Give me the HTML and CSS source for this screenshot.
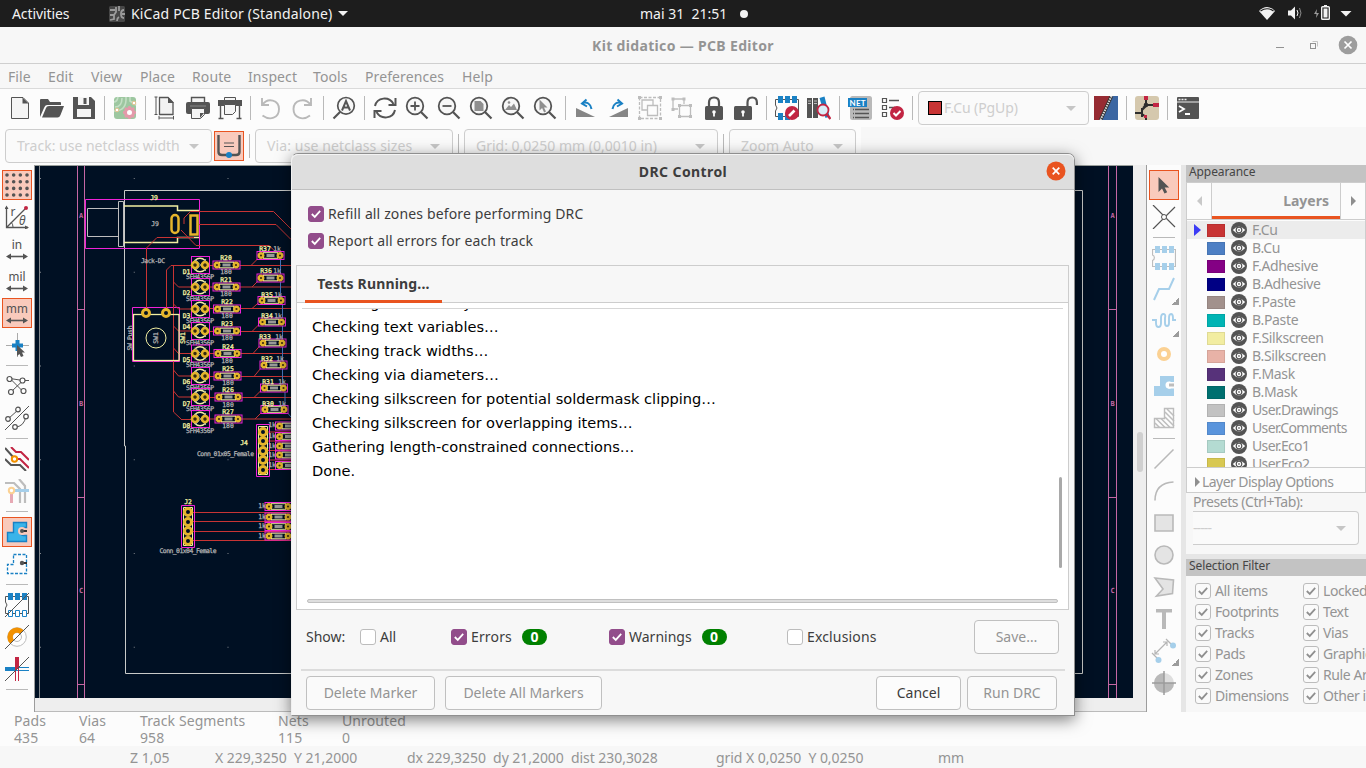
FILE: index.html
```html
<!DOCTYPE html>
<html lang="en">
<head>
<meta charset="utf-8">
<title>Kit didatico — PCB Editor</title>
<link rel="stylesheet" href="styles.css">
</head>
<body>
<svg class="defs" width="0" height="0">
  <symbol id="eye" viewBox="0 0 16 16"><circle cx="8" cy="8" r="8" fill="#545454"/><path d="M1.800 8Q8 1 14.200 8Q8 15 1.800 8Z" fill="#fff"/><circle cx="8" cy="8" r="2.800" fill="#fff" stroke="#545454" stroke-width="1.200"/><circle cx="8" cy="8" r=".9" fill="#777"/></symbol>
  <symbol id="lens" viewBox="0 0 24 24"><circle cx="10" cy="10" r="8.300" fill="#f7f7f7" stroke="#545454" stroke-width="1.800"/><path d="M16 16L22.500 22.500" stroke="#545454" stroke-width="2.200"/></symbol>
  <symbol id="tick" viewBox="0 0 16 16"><path d="M3.200 8L6.600 11.300L12.800 4.400" fill="none" stroke="currentColor" stroke-width="2"/></symbol>
  <symbol id="chip" viewBox="0 0 24 24"><path d="M.5 3.500H23.500V20.500H.5V14.500C3 13.500 3 10 .5 9Z" fill="none" stroke="#bdbdbd" stroke-width="1.200"/><path d="M3 0h5v7H3zM10 0h5v7h-5zM17 0h5v7h-5zM3 17h5v7H3zM10 17h5v7h-5zM17 17h5v7h-5z" fill="currentColor"/></symbol>
</svg>

<header class="shell">
  <span class="activities">Activities</span>
  <svg class="app-icon" viewBox="0 0 16 16"><rect width="16" height="16" rx="1.500" fill="#474747"/><path d="M1 4h5M1 9h4l2-3V1M1 14l4-1V9M15 4c-4 0-4 8 0 8M10 0v5M8 15c0-3 2-4 2-4M13 8h3" stroke="#9b9b9b" stroke-width="1.800" fill="none"/></svg>
  <span class="app-name">KiCad PCB Editor (Standalone)</span><i class="caret white"></i>
  <span class="clock">mai 31&nbsp; 21:51</span><i class="dot"></i>
  <svg class="tray" viewBox="1256 0 110 27"><path d="M1259 11Q1267 3 1275 11L1267 20Z" fill="#f2f2f2"/><path d="M1260.500 11Q1267 6.500 1273.500 11" stroke="#1d1d1d" stroke-width="1.200" fill="none"/><path d="M1288 10.500h3l4-4v13l-4-4h-3z" fill="#f2f2f2"/><path d="M1297 10q2 3 0 6" stroke="#f2f2f2" fill="none"/><path d="M1299.500 8q3 5 0 10" stroke="#8a8a8a" fill="none"/><path d="M1317 9l-3 5h2.500l-.5 4 3-5h-2.500z" fill="#9a9a9a"/><rect x="1321.700" y="6.700" width="7.600" height="12.600" rx=".8" fill="none" stroke="#f2f2f2" stroke-width="1.400"/><path d="M1323.500 8.500h4v9h-4zM1324 5h3v1h-3z" fill="#f2f2f2"/><path d="M1340.500 11h11l-5.500 5.500z" fill="#f2f2f2"/></svg>
</header>

<div class="titlebar">
  <b>Kit didatico — PCB Editor</b>
  <svg class="winbtns" viewBox="1270 33 90 24"><path d="M1276 47.500h8" stroke="#929292"/><path d="M1312.500 41.500h5v5" fill="none" stroke="#c5c5c5"/><rect x="1310.500" y="43.500" width="5" height="5" fill="none" stroke="#929292"/><circle cx="1348" cy="45" r="9.300" fill="#9d9d9d"/><path d="M1344.500 41.500l7 7m0-7l-7 7" stroke="#fff" stroke-width="1.700"/></svg>
</div>

<nav class="menubar"><span class="m1">File</span><span class="m2">Edit</span><span class="m3">View</span><span class="m4">Place</span><span class="m5">Route</span><span class="m6">Inspect</span><span class="m7">Tools</span><span class="m8">Preferences</span><span>Help</span></nav>

<div class="toolbar main-tools">
  <svg class="tool" viewBox="0 0 24 24"><path d="M3.500 1.500H15L20.500 7V22.500H3.500Z" fill="#f5f5f5" stroke="#545454"/><path d="M14.500 1.500V7.500H20.500Z" fill="#545454"/></svg>
  <svg class="tool" viewBox="0 0 24 24"><path d="M0 21V4q0-1 1-1h7l2 3h10q1 0 1 1v2H7Q5 9 4 12Z" fill="#545454"/><path d="M2 21.500L6 12q.5-2 3-2h15l-3.500 9q-1 2.500-3 2.500Z" fill="#545454"/></svg>
  <svg class="tool" viewBox="0 0 24 24"><path d="M1 1h18l4 4v18H1z" fill="#545454"/><path d="M6 1h11v8H6zM5 13h14v8H5z" fill="#f5f5f5"/><path d="M11.500 2h3v6h-3z" fill="#545454"/></svg>
  <i class="sep"></i>
  <svg class="tool" viewBox="0 0 24 24"><rect x="1" y="1" width="22" height="22" rx="3" fill="#9dc7a0"/><path d="M2 11Q9 11 9 2M1 15Q14 15 13 1M1 6q3 0 4-5M17 1v4l6 4" stroke="#c4dfc5" stroke-width="1.600" fill="none"/><g stroke="#e49aaa" stroke-width="3" fill="#fff"><circle cx="16.500" cy="16.500" r="4"/><path d="M16.500 10v2m0 9v2M10 16.500h2m9 0h2M12 12l1.500 1.500m6 6l1.500 1.500M21 12l-1.500 1.500m-6 6L12 21" stroke-width="2.500"/></g><circle cx="4" cy="14" r="1.800" fill="#fff" stroke="#e6c18e"/><circle cx="21" cy="7" r="1.800" fill="#fff" stroke="#e6c18e"/></svg>
  <i class="sep"></i>
  <svg class="tool" viewBox="0 0 24 24"><path d="M5.500 1.500H14l5 5V18.500H5.500Z" fill="#f2f2f2" stroke="#545454" stroke-width="1.300"/><path d="M14 1v6h6z" fill="#545454"/><path d="M.5 1h3M.5 18.500h3M2 1v17.500M5 20v3.500M19.500 20v3.500M5 22h14" stroke="#545454" fill="none"/></svg>
  <svg class="tool" viewBox="0 0 24 24"><path d="M5.500 7V1.500h13V7" fill="#f5f5f5" stroke="#545454" stroke-width="1.400"/><rect y="6" width="24" height="12" rx="2" fill="#545454"/><path d="M4 10h16" stroke="#777" stroke-width="1.500"/><path d="M5.500 12.500h13v6l-4 4h-9z" fill="#f5f5f5" stroke="#545454"/><path d="M18 17h-4v5z" fill="#545454"/></svg>
  <svg class="tool" viewBox="0 0 24 24"><path d="M6.500 5V1.500h11V5" fill="#f5f5f5" stroke="#545454"/><path d="M0 4h24v6H0z" fill="#545454"/><path d="M6.500 8.500h11v7l-3 3h-8z" fill="#f5f5f5" stroke="#545454"/><path d="M2.500 10v12m19-12v12M.5 22.500h5m13 0h5" stroke="#545454" stroke-width="1.400"/></svg>
  <i class="sep"></i>
  <svg class="tool" viewBox="0 0 24 24"><path d="M3 2v7h7M3.500 8.500C9 1 20 4 20 13S11 25 3.500 19.500" fill="none" stroke="#b9b9b9" stroke-width="1.900"/></svg>
  <svg class="tool" viewBox="0 0 24 24"><path d="M20 2v7h-7M19.500 8.500C14 1 2.500 4 2.500 13S12 25 19 19.500" fill="none" stroke="#b9b9b9" stroke-width="1.900"/></svg>
  <i class="sep"></i>
  <svg class="tool" viewBox="0 0 24 24"><circle cx="14" cy="9.800" r="8.300" fill="#f7f7f7" stroke="#545454" stroke-width="1.700"/><path d="M8 16L1.500 22.500" stroke="#545454" stroke-width="2.200"/><path d="M10 14.500L14 5l4 9.500M11.500 11.500h5" stroke="#545454" stroke-width="2" fill="none"/></svg>
  <i class="sep"></i>
  <svg class="tool" viewBox="0 0 24 24"><path d="M2 10C4 1 16 0 20.500 8M22.500 2v7h-7M22 14C20 23 8 24 3.500 16M1.500 22v-7h7" fill="none" stroke="#545454" stroke-width="2"/></svg>
  <svg class="tool" viewBox="0 0 24 24"><use href="#lens"/><path d="M10 5.500v9M5.500 10h9" stroke="#545454" stroke-width="1.800"/></svg>
  <svg class="tool" viewBox="0 0 24 24"><use href="#lens"/><path d="M5.500 10h9" stroke="#545454" stroke-width="1.800"/></svg>
  <svg class="tool" viewBox="0 0 24 24"><use href="#lens"/><path d="M5.500 5h6l3 3v7h-9z" fill="#8f8f8f"/></svg>
  <svg class="tool" viewBox="0 0 24 24"><use href="#lens"/><path d="M4 14l4-5 2 2 3-3.500 3 6.500z" fill="#8f8f8f"/><circle cx="8" cy="6.500" r="1.300" fill="#8f8f8f"/></svg>
  <svg class="tool" viewBox="0 0 24 24"><use href="#lens"/><path d="M6.500 3.500v11l2.600-2.400 2 4.400 1.900-.9-2-4.100h3.500z" fill="#8f8f8f"/></svg>
  <i class="sep"></i>
  <svg class="tool" viewBox="0 0 24 24"><path d="M2 12l19 9H2z" fill="#868686"/><path d="M8 7q8-2 9.500 6M12.500 3.500L8 7.500l5 3" stroke="#1a81c4" stroke-width="2" fill="none"/></svg>
  <svg class="tool" viewBox="0 0 24 24"><path d="M22 12L3 21h19z" fill="#868686"/><path d="M16 7q-8-2-9.500 6M11.500 3.500L16 7.500l-5 3" stroke="#1a81c4" stroke-width="2" fill="none"/></svg>
  <svg class="tool" viewBox="0 0 24 24"><g fill="none" stroke="#bdbdbd" stroke-width="1.300"><path d="M1.500 1.500h21v21h-21z" stroke-dasharray="3 1.500"/><path d="M9 14H4V4h11v5M9.500 9.500h10v10h-10z"/></g><path d="M0 0h3v3H0zM21 0h3v3h-3zM0 21h3v3H0zM21 21h3v3h-3z" fill="#bdbdbd"/></svg>
  <svg class="tool" viewBox="0 0 24 24"><path d="M8 13H3V3h11v5M9.500 9.500h11v11h-11z" fill="none" stroke="#bdbdbd" stroke-width="1.300"/><path d="M1.500 1.500h3v3h-3zM12.500 1.500h3v3h-3zM1.500 12h3v3h-3zM8 8h3v3H8zM19 8h3v3h-3zM8 19h3v3H8zM19 19h3v3h-3z" fill="#bdbdbd"/></svg>
  <svg class="tool" viewBox="0 0 24 24"><path d="M7 11V6.500q0-5 5-5t5 5V11" fill="none" stroke="#545454" stroke-width="2.200"/><rect x="3" y="10" width="18" height="14" rx="1.500" fill="#545454"/><path d="M12 15.500v5" stroke="#fff" stroke-width="1.800"/><circle cx="12" cy="16" r="1.800" fill="#fff"/></svg>
  <svg class="tool" viewBox="0 0 24 24"><path d="M13.500 11V6.500q0-5 4.700-5t4.700 5V9" fill="none" stroke="#545454" stroke-width="2.200"/><rect y="10" width="18" height="14" rx="1.500" fill="#545454"/><path d="M9 15.500v5" stroke="#fff" stroke-width="1.800"/><circle cx="9" cy="16" r="1.800" fill="#fff"/></svg>
  <i class="sep"></i>
  <svg class="tool" viewBox="0 0 24 24"><path d="M.5 3.500h23v17H.5V15q3-3 0-6z" fill="none" stroke="#545454"/><path d="M3 0h5v7H3zM10 0h5v7h-5zM17 0h5v7h-5zM3 17h5v7H3zM10 17h5v7h-5z" fill="#1a81c4"/><circle cx="17" cy="17" r="7" fill="#c22543"/><path d="M14 20l5.500-5.500" stroke="#fff" stroke-width="2.600"/></svg>
  <svg class="tool" viewBox="0 0 24 24"><path d="M0 2h5v20H0zM6 2h5v20H6z" fill="#545454"/><path d="M1 5h3M1 7.500h3M7 5h3M7 7.500h3" stroke="#bbb"/><path d="M12.500 2l5-1.500 5 20-4 1.500z" fill="#1a81c4"/><circle cx="16" cy="14" r="5.500" fill="#d9edf7" stroke="#c22543" stroke-width="1.800"/><path d="M19.500 18l4 5" stroke="#c22543" stroke-width="2.500"/></svg>
  <i class="sep"></i>
  <svg class="tool" viewBox="0 0 24 24"><rect x="2" width="22" height="24" rx="2.500" fill="#b9b9b9"/><path d="M5 13.500h1M5 17.500h1M5 21.500h1M7 13.500h14M7 17.500h14M7 21.500h14" stroke="#545454" stroke-width="1.700"/><path d="M0 2h19v9H0z" fill="#1a81c4"/><text x="9.500" y="9.700" class="net" text-anchor="middle" textLength="16">NET</text></svg>
  <svg class="tool" viewBox="0 0 24 24"><path d="M2.500 2.500h4v4h-4zM2.500 9.500h4v4h-4zM2.500 16.500h4v4h-4z" fill="none" stroke="#545454" stroke-width="1.200"/><path d="M9 4.500h10M9 11.500h6" stroke="#545454" stroke-width="1.300"/><circle cx="17" cy="17" r="7" fill="#c22543"/><path d="M13.500 17l2.500 2.500 4.500-4.500" fill="none" stroke="#fff" stroke-width="2"/></svg>
  <i class="sep"></i>
  <div class="combo layer-combo"><i class="sw-fcu"></i><span>F.Cu (PgUp)</span><i class="caret"></i></div>
  <svg class="tool" viewBox="0 0 24 24"><path d="M0 0h24v24H0z" fill="#3b66a2"/><path d="M0 0h18L7 24H0z" fill="#962b32"/><path d="M17.500 0l-11 24" stroke="#333" stroke-width="3.500"/><path d="M17.500 0l-11 24" stroke="#ddd" stroke-width="2" stroke-dasharray="1.500 1"/></svg>
  <i class="sep"></i>
  <svg class="tool" viewBox="0 0 24 24"><rect width="24" height="24" rx="3" fill="#d5c8ad"/><path d="M11 3v6l-3 3M11 9h8M0 17h8M7 12v9M7 14l4-4M7 18l4 3v3" stroke="#2e2e2e" stroke-width="2" fill="none"/><circle cx="11" cy="9" r="2.300" fill="#2e2e2e"/><path d="M9 0h4v4H9zM18 7h6v4h-6zM9 19h3v3H9z" fill="#c22543"/></svg>
  <i class="sep"></i>
  <svg class="tool" viewBox="0 0 24 24"><rect x="1" y="1" width="22" height="22" rx="1" fill="#545454"/><path d="M1 6h22" stroke="#eee"/><path d="M2.500 3.500h2M5.500 3.500h2M8.500 3.500h2" stroke="#eee" stroke-width="1.600"/><path d="M3 10l5 3-5 3M9 18h5" fill="none" stroke="#fff" stroke-width="1.800"/></svg>
</div>

<div class="toolrow">
  <div class="toolbar">
    <div class="combo c-track"><span>Track: use netclass width</span><i class="caret"></i></div>
    <div class="tool on"><svg viewBox="0 0 24 24"><path d="M1.500 1v17q0 3 3.500 3h14q3.500 0 3.500-3V1" fill="none" stroke="#545454" stroke-width="2.400"/><path d="M7 9h10M7 12.500h10" stroke="#545454" stroke-width="1.200"/><circle cx="12" cy="21" r="3" fill="#1a81c4"/></svg></div>
    <i class="sep"></i>
    <div class="combo c-via"><span>Via: use netclass sizes</span><i class="caret"></i></div>
    <i class="sep"></i>
    <div class="combo c-grid"><span>Grid: 0,0250 mm (0,0010 in)</span><i class="caret"></i></div>
    <i class="sep"></i>
    <div class="combo c-zoom"><span>Zoom Auto</span><i class="caret"></i></div>
  </div>
</div>

<main class="work">
  <aside class="vbar left">
    <div class="tool on"><svg viewBox="0 0 24 24"><g stroke="#545454" stroke-width="3.600" stroke-linecap="round" stroke-dasharray="0 6.670"><path d="M2 2h21M2 8.700h21M2 15.400h21M2 22h21"/></g></svg></div>
    <svg class="tool" viewBox="0 0 24 24"><path d="M1.500 2v20.500H23M2 22L20 4" stroke="#545454" fill="none" stroke-width="1.300"/><path d="M-.5 4l2-3.500 2 3.500zM20 20.500l4 2-4 2z" fill="#545454"/><path d="M8 22q0-3-2-5" stroke="#545454" fill="none"/><circle cx="21" cy="3" r="2" fill="#c22543"/><text x="5.500" y="11" class="lbl">r</text><text x="14" y="20" class="lbl ital">θ</text></svg>
    <svg class="tool" viewBox="0 0 24 24"><text x="12" y="12" class="unit" text-anchor="middle">in</text><path d="M3 19.500h18" stroke="#545454" stroke-width="1.600"/><path d="M6 16.500l-5 3 5 3zM18 16.500l5 3-5 3z" fill="#545454"/></svg>
    <svg class="tool" viewBox="0 0 24 24"><text x="12" y="12" class="unit" text-anchor="middle">mil</text><path d="M3 19.500h18" stroke="#545454" stroke-width="1.600"/><path d="M6 16.500l-5 3 5 3zM18 16.500l5 3-5 3z" fill="#545454"/></svg>
    <div class="tool on"><svg viewBox="0 0 24 24"><text x="12" y="12" class="unit" text-anchor="middle" textLength="22">mm</text><path d="M3 19.500h18" stroke="#545454" stroke-width="1.600"/><path d="M6 16.500l-5 3 5 3zM18 16.500l5 3-5 3z" fill="#545454"/></svg></div>
    <svg class="tool" viewBox="0 0 24 24"><path d="M12.500 0v24M1 12.500h23" stroke="#aaa"/><path d="M12.500 7v11M7 12.500h11" stroke="#1a81c4" stroke-width="4"/><path d="M12 12v11l2.500-2 1.500 3 2.500-1-1.500-3.500h3z" fill="#545454"/></svg>
    <i class="hsep"></i>
    <svg class="tool" viewBox="0 0 24 24"><path d="M5 4.500l14 14M5 4.500l13 2L6 18M18 6.500h6" stroke="#545454" fill="none"/><g fill="#fff" stroke="#545454" stroke-width="1.200"><circle cx="4.500" cy="5" r="2.500"/><circle cx="17.500" cy="6.500" r="2.500"/><circle cx="6" cy="18" r="2.500"/><circle cx="18.500" cy="17" r="2.500"/></g></svg>
    <svg class="tool" viewBox="0 0 24 24"><path d="M0 24L24 0M3 13L13 4M10 21q9 0 11-11" stroke="#545454" fill="none"/><g fill="#fff" stroke="#545454" stroke-width="1.200"><circle cx="13" cy="3.500" r="2.300"/><circle cx="3" cy="13" r="2.300"/><circle cx="21" cy="10.500" r="2.300"/><circle cx="10" cy="21" r="2.300"/></g></svg>
    <i class="hsep"></i>
    <svg class="tool" viewBox="0 0 24 24"><path d="M0 1l9 10M0 12l6 6h9l6 6" stroke="#545454" stroke-width="2" fill="none"/><path d="M6 0l5 5h5l8 8M12 12h3l9 9" stroke="#c22543" stroke-width="2" fill="none"/><circle cx="9.500" cy="12" r="2.700" fill="#fff" stroke="#f29100" stroke-width="2"/></svg>
    <svg class="tool" viewBox="0 0 24 24"><path d="M0 4h9l6 6v14M14 0l6 7v17" stroke="#bdbdbd" stroke-width="2.200" fill="none"/><path d="M8 11.500h16" stroke="#a6cfea" stroke-width="3"/><path d="M6.500 13v11" stroke="#e7a9b4" stroke-width="3"/><circle cx="6.500" cy="11.500" r="2.700" fill="#fff" stroke="#fbd193" stroke-width="2"/></svg>
    <i class="hsep"></i>
    <div class="tool on"><svg viewBox="0 0 24 24"><path d="M8.500 2.500h13v5h-3a4 4 0 1 0 0 8h3v6h-19v-9h6z" fill="#39b4ea" stroke="#1a81c4" stroke-width="1.400"/><circle cx="17" cy="11" r="4" fill="#f9cabc"/><path d="M16 11h6" stroke="#333" stroke-width="2"/><circle cx="17" cy="11" r="2" fill="#545454"/></svg></div>
    <svg class="tool" viewBox="0 0 24 24"><path d="M8.500 2.500h13v19h-19v-9h6z" fill="none" stroke="#1a81c4" stroke-width="1.300" stroke-dasharray="3 1.500"/><path d="M16 11h6" stroke="#333" stroke-width="2"/><circle cx="17" cy="11" r="2.200" fill="#545454"/></svg>
    <i class="hsep"></i>
    <svg class="tool" viewBox="0 0 24 24"><path d="M.5 3.500h23v17H.5V15q3-3 0-6z" fill="none" stroke="#545454"/><path d="M3 0h5v7H3zM10 0h5v7h-5zM17 0h5v7h-5z" fill="#1a81c4"/><path d="M3.500 17.500h4v6h-4zM10.500 17.500h4v6h-4zM17.500 17.500h4v6h-4z" fill="#fff" stroke="#1a81c4"/><path d="M0 24L24 0" stroke="#545454"/></svg>
    <svg class="tool" viewBox="0 0 24 24"><circle cx="12" cy="12" r="9.300" fill="#fff" stroke="#bdbdbd"/><circle cx="12" cy="12" r="4.500" fill="#fff" stroke="#bdbdbd"/><path d="M5.200 18.800A9.500 9.500 0 0 1 18.800 5.200L15 9a4 4 0 0 0-6 6z" fill="#f29100"/><path d="M0 24L24 0" stroke="#545454"/></svg>
    <svg class="tool" viewBox="0 0 24 24"><path d="M0 12h12" stroke="#1a81c4" stroke-width="4"/><path d="M12 10.500h12M12 13.500h12" stroke="#1a81c4"/><path d="M12 0v12" stroke="#c22543" stroke-width="4"/><path d="M10.500 12v12M13.500 12v12" stroke="#c22543"/><path d="M0 24L24 0" stroke="#545454"/></svg>
    <i class="hsep"></i>
  </aside>

  <section class="canvas">
    <svg class="board" width="1098" height="533" viewBox="35 165 1098 533">
      <defs>
        <g id="pad"><circle r="3.500" fill="#001023" stroke="#e4b52c" stroke-width="3"/></g>
        <g id="padS"><circle r="2.300" fill="#3c2c10" stroke="#e4b52c" stroke-width="2.400"/></g>
        <g id="led"><rect x="-8.500" y="-8.500" width="18" height="17" fill="none" stroke="#f022d8"/><circle r="6.800" fill="none" stroke="#f2efa2" stroke-width="1.400"/><path d="M-5-6L6 6M6-6L-5 6" stroke="#aaa"/><circle cx="-5" r="3" fill="#332a10" stroke="#e4b52c" stroke-width="2.600"/><circle cx="5" r="3" fill="#332a10" stroke="#e4b52c" stroke-width="2.600"/><text y="13.500" class="gl" textLength="28">SFH4356P</text></g>
        <g id="res"><rect x="-13.500" y="-4" width="27" height="8" fill="#001023" stroke="#f022d8"/><rect x="-7" y="-2.800" width="14" height="5.600" fill="#001023" stroke="#f2efa2"/><rect x="-4" y="-1.500" width="8" height="3" fill="#999"/><use href="#padS" x="-9.500"/><use href="#padS" x="9.500"/></g>
        <pattern id="dots" x="40" y="178" width="93.750" height="93.750" patternUnits="userSpaceOnUse"><rect width="1" height="1" fill="#7d8288"/></pattern>
      </defs>
      <rect x="35" y="165" width="1098" height="533" fill="#001023"/>
      <rect x="35" y="165" width="1098" height="533" fill="url(#dots)"/>
      <path d="M39.500 165V698" stroke="#84888c"/>
      <path d="M77.500 165V698M84.500 165V698M1108.500 165V698M1116.500 165V698M78 309.500h6M78 497.500h6M78 684.500h6M1109 309.500h7M1109 497.500h7M1109 684.500h7" stroke="#c567a4"/>
      <path d="M35 165.500H1133" stroke="#9a9f9c"/>
      <g class="zone"><text x="81" y="218">A</text><text x="81" y="406">B</text><text x="81" y="593">C</text><text x="1112.500" y="218">A</text><text x="1112.500" y="406">B</text><text x="1112.500" y="593">C</text></g>
      <path d="M124.500 446V190.500H1082.500V673.500H125.500V446Z" fill="none" stroke="#c8cac8"/>
      <g fill="none" stroke="#bebebe"><path d="M87.500 208.500h31v28h-31zM118.500 201.500h5v45h-5z"/></g>
      <path d="M124 206H177.500V210.500H199M124 242.500H177.500V237.500H199" fill="none" stroke="#f2efa2" stroke-width="1.500"/>
      <path d="M85.500 199.500h114v49h-114zM132.500 307.500h47v54h-47z" fill="none" stroke="#f022d8"/>
      <g fill="none" stroke="#c83434">
        <path d="M146.500 313V248L157 237.500H194M166.500 313V270L171 265.500H195M199 224.500H276L291 239.500M184 224V218L190.500 211.500H273.500L291 229M181 230L196 245.500H269L280 256"/>
        <path d="M173.500 265V412L181 419M173.500 282l5 5h15M173.500 304l5 5h15M173.500 326l5 5h15M173.500 348l5 5.500h15M173.500 370l5 6h15M173.500 391l5 6h15M181 419.500h15"/>
        <path d="M205 265.500H291M205 287H291M205 308.500H291M205 331.500H291M205 353.500H291M205 376.500H291M205 397.500H291M205 419H291M251 265.500l9-9M252 287l8-8M252 308.500l9-8M252 331.500l9-9M253 353.500l9-10M254 376.500l9-11M254 397.500l10-10M255 419l9-9"/>
        <path d="M268 432H291M268 441H291M268 450.500H291M268 460H291M268 469.500H291M192 512.500H291M192 521.500H291M192 531.500H291M192 540.500H291"/>
      </g>
      <path d="M280.500 260V293L282.500 300V385L285 392V410L291 417" fill="none" stroke="#4a76bd"/>
      <rect x="171.500" y="215" width="7" height="18" rx="3.500" fill="#001023" stroke="#e4b52c" stroke-width="2.500"/>
      <rect x="190.500" y="215.500" width="7" height="19" fill="#001023" stroke="#e4b52c" stroke-width="2.500"/>
      <rect x="133.500" y="314.500" width="45.500" height="46" fill="none" stroke="#f2efa2" stroke-width="1.300"/>
      <circle cx="156" cy="338" r="10" fill="none" stroke="#f2efa2"/>
      <use href="#pad" x="146" y="313"/><use href="#pad" x="166" y="313"/>
      <use href="#led" x="200" y="265"/><use href="#led" x="200" y="287"/><use href="#led" x="200" y="309"/><use href="#led" x="200" y="331"/><use href="#led" x="200" y="353.500"/><use href="#led" x="200" y="376"/><use href="#led" x="200" y="397"/><use href="#led" x="200" y="419"/>
      <use href="#res" x="226.500" y="265"/><use href="#res" x="226.500" y="287"/><use href="#res" x="227" y="309"/><use href="#res" x="227" y="331"/><use href="#res" x="227.500" y="353.500"/><use href="#res" x="227.500" y="376"/><use href="#res" x="228.500" y="397"/><use href="#res" x="228.500" y="419"/>
      <use href="#res" x="270.500" y="255.500"/><use href="#res" x="270.500" y="278"/><use href="#res" x="271.500" y="300.500"/><use href="#res" x="272" y="322"/><use href="#res" x="272.500" y="343"/><use href="#res" x="273.500" y="365"/><use href="#res" x="274" y="388"/><use href="#res" x="274.500" y="409.500"/>
      <use href="#res" x="289" y="426"/><use href="#res" x="289" y="436.500"/><use href="#res" x="289" y="446"/><use href="#res" x="289" y="455"/><use href="#res" x="289" y="465.500"/>
      <use href="#res" x="278.500" y="506.500"/><use href="#res" x="278.500" y="517"/><use href="#res" x="278.500" y="526.500"/><use href="#res" x="278.500" y="536"/>
      <g fill="none" stroke="#f022d8"><path d="M256.500 424.500h13v52h-13zM181.500 505.500h13v42h-13z"/></g>
      <g fill="none" stroke="#f2efa2"><path d="M258.500 426.500h9v48h-9zM183.500 507.500h9v38h-9z"/></g>
      <use href="#pad" x="263" y="432"/><use href="#pad" x="263" y="441"/><use href="#pad" x="263" y="451"/><use href="#pad" x="263" y="460"/><use href="#pad" x="263" y="470"/>
      <use href="#pad" x="188" y="512"/><use href="#pad" x="188" y="522"/><use href="#pad" x="188" y="531"/><use href="#pad" x="188" y="541"/>
      <g class="yl">
        <text x="154" y="200">J9</text><text x="226" y="260">R20</text><text x="226" y="282">R21</text><text x="227" y="304">R22</text><text x="227" y="326">R23</text><text x="228" y="349">R24</text><text x="228" y="371">R25</text><text x="228" y="392">R26</text><text x="228" y="414">R27</text>
        <text x="265" y="251">R37</text><text x="266" y="273">R36</text><text x="267" y="297">R35</text><text x="267" y="318">R34</text><text x="265" y="339">R33</text><text x="267" y="361">R32</text><text x="268" y="384">R31</text><text x="268" y="406">R30</text>
        <text x="186.500" y="274">D1</text><text x="186.500" y="295">D2</text><text x="186.500" y="318">D3</text><text x="186.500" y="329">D4</text><text x="186.500" y="362">D5</text><text x="186.500" y="384">D6</text><text x="186.500" y="406">D7</text><text x="186.500" y="428">D8</text>
        <text x="244" y="445">J4</text><text x="188" y="504">J2</text><text transform="translate(184.500 338) rotate(-90)">SW1</text>
      </g>
      <g class="gl">
        <text x="155" y="226">J9</text><text x="153" y="263" textLength="24">Jack-DC</text>
        <text x="226" y="274">180</text><text x="226" y="296">180</text><text x="227" y="318">180</text><text x="227" y="340">180</text><text x="227" y="363">180</text><text x="228" y="385">180</text><text x="228" y="407">180</text><text x="228" y="428">180</text>
        <text x="277" y="251">1k</text><text x="277" y="273">1k</text><text x="278" y="297">1k</text><text x="278" y="318">1k</text><text x="279" y="339">1k</text><text x="280" y="361">1k</text><text x="282" y="384">1k</text><text x="282" y="406">1k</text>
        <text x="272" y="427">1k</text><text x="272" y="438">1k</text><text x="272" y="448">1k</text><text x="272" y="457">1k</text><text x="272" y="467">1k</text>
        <text x="262" y="508">1k</text><text x="262" y="519">1k</text><text x="262" y="528">1k</text><text x="262" y="538">1k</text>
        <text x="225.500" y="456" textLength="57">Conn_01x05_Female</text><text x="188" y="553" textLength="57">Conn_01x04_Female</text>
        <text transform="translate(131.500 338) rotate(-90)" textLength="25">SW Push</text><text transform="translate(158 338) rotate(-90)">SW1</text>
      </g>
    </svg>
    <div class="vscroll"><i></i></div>
    <div class="hscroll"></div>
  </section>

  <aside class="vbar right">
    <div class="tool on"><svg viewBox="0 0 24 24"><path d="M6.500 4v15l3.500-3.500 2.500 5 2.700-1.300-2.500-4.700h4.500z" fill="#545454"/></svg></div>
    <svg class="tool" viewBox="0 0 24 24"><path d="M1 0l22 22M23 2L1 24" stroke="#545454" stroke-width="1.200"/><circle cx="12" cy="12" r="2.500" fill="#fff" stroke="#545454"/></svg>
    <i class="hsep"></i>
    <svg class="tool pale" viewBox="0 0 24 24"><use href="#chip"/></svg>
    <div class="tool more"><svg viewBox="0 0 24 24"><path d="M2 22L7 11h10l5-11" fill="none" stroke="#a6cfea" stroke-width="2"/></svg></div>
    <div class="tool more"><svg viewBox="0 0 24 24"><path d="M0 10h4v3q0 4 2.500 4T9 13V8q0-4 2.500-4T13 8v5q0 3 2 3t2-3V8q0-4 2-4t2 4v2h3" fill="none" stroke="#a6cfea" stroke-width="1.900"/></svg></div>
    <svg class="tool" viewBox="0 0 24 24"><circle cx="12" cy="12" r="5" fill="#fff" stroke="#fbd193" stroke-width="4"/></svg>
    <svg class="tool" viewBox="0 0 24 24"><path d="M8 2h14v6h-3a3.500 3.500 0 1 0 0 6.500h3V22H2V12h6z" fill="#a6cfea"/><circle cx="17" cy="11" r="3.500" fill="#fff"/><path d="M17 11h5" stroke="#bdbdbd" stroke-width="3"/></svg>
    <svg class="tool" viewBox="0 0 24 24"><path d="M12.500 2.500h9v19h-19v-9h10z" fill="none" stroke="#bdbdbd" stroke-width="1.400"/><path d="M3 17l4.500 4.500M4 12.500l9 9M9 12.500l9 9M13 11l9 9M13 6l9 9M15 3l7 7" stroke="#bdbdbd" stroke-width="1.500"/></svg>
    <i class="hsep"></i>
    <svg class="tool line" viewBox="0 0 24 24"><path d="M2.500 21.500l19-19"/></svg>
    <svg class="tool line" viewBox="0 0 24 24"><path d="M3 21.500Q3 4 21.500 3"/></svg>
    <svg class="tool line" viewBox="0 0 24 24"><path d="M3 4h18v16H3z" fill="#e4e4e4"/></svg>
    <svg class="tool line" viewBox="0 0 24 24"><circle cx="12" cy="12" r="9" fill="#e4e4e4"/></svg>
    <svg class="tool line" viewBox="0 0 24 24"><path d="M3 3l18.500 2-1 13.500L4.500 21l6.500-7z" fill="#e4e4e4"/></svg>
    <svg class="tool" viewBox="0 0 24 24"><path d="M4 2h16v3.500h-6V22h-4V5.500H4z" fill="#b9b9b9"/></svg>
    <div class="tool more"><svg viewBox="0 0 24 24"><path d="M3 15L15 3M0 14l7 7M14 0l8 8M3 11v4h4M11 3h4v4" stroke="#b4b4b4" fill="none" stroke-width="1.200"/><circle cx="21" cy="6.500" r="3" fill="#a6cfea"/><circle cx="6.500" cy="21" r="3" fill="#a6cfea"/></svg></div>
    <svg class="tool" viewBox="0 0 24 24"><circle cx="12" cy="12" r="10" fill="#dedede"/><path d="M12 2v10H2A10 10 0 0 1 12 2zM12 12h10a10 10 0 0 1-10 10z" fill="#b9b9b9"/><path d="M2 12h10v10A10 10 0 0 1 2 12z" fill="#b9b9b9"/><path d="M12 0v24M0 12h24" stroke="#9c9c9c" stroke-width="1.500"/></svg>
  </aside>

  <aside class="panel">
    <div class="cap">Appearance</div>
    <div class="tabs"><i class="arr l"></i><b>Layers</b><i class="arr r"></i></div>
    <div class="layers">
      <div class="row cur"><i class="sw c1"></i><svg><use href="#eye"/></svg>F.Cu</div>
      <div class="row"><i class="sw c2"></i><svg><use href="#eye"/></svg>B.Cu</div>
      <div class="row"><i class="sw c3"></i><svg><use href="#eye"/></svg>F.Adhesive</div>
      <div class="row"><i class="sw c4"></i><svg><use href="#eye"/></svg>B.Adhesive</div>
      <div class="row"><i class="sw c5"></i><svg><use href="#eye"/></svg>F.Paste</div>
      <div class="row"><i class="sw c6"></i><svg><use href="#eye"/></svg>B.Paste</div>
      <div class="row"><i class="sw c7"></i><svg><use href="#eye"/></svg>F.Silkscreen</div>
      <div class="row"><i class="sw c8"></i><svg><use href="#eye"/></svg>B.Silkscreen</div>
      <div class="row"><i class="sw c9"></i><svg><use href="#eye"/></svg>F.Mask</div>
      <div class="row"><i class="sw c10"></i><svg><use href="#eye"/></svg>B.Mask</div>
      <div class="row"><i class="sw c11"></i><svg><use href="#eye"/></svg><span class="tight">User.Drawings</span></div>
      <div class="row"><i class="sw c12"></i><svg><use href="#eye"/></svg><span class="tight">User.Comments</span></div>
      <div class="row"><i class="sw c13"></i><svg><use href="#eye"/></svg><span class="tight">User.Eco1</span></div>
      <div class="row"><i class="sw c14"></i><svg><use href="#eye"/></svg><span class="tight">User.Eco2</span></div>
    </div>
    <div class="ldo"><i></i>Layer Display Options</div>
    <div class="presets">Presets (Ctrl+Tab):</div>
    <div class="pcombo"><span>-----</span><i class="caret"></i></div>
    <div class="cap second">Selection Filter</div>
    <div class="filters">
      <label><svg class="cb"><use href="#tick"/></svg>All items</label><label><svg class="cb"><use href="#tick"/></svg>Locked items</label>
      <label><svg class="cb"><use href="#tick"/></svg>Footprints</label><label><svg class="cb"><use href="#tick"/></svg>Text</label>
      <label><svg class="cb"><use href="#tick"/></svg>Tracks</label><label><svg class="cb"><use href="#tick"/></svg>Vias</label>
      <label><svg class="cb"><use href="#tick"/></svg>Pads</label><label><svg class="cb"><use href="#tick"/></svg>Graphics</label>
      <label><svg class="cb"><use href="#tick"/></svg>Zones</label><label><svg class="cb"><use href="#tick"/></svg>Rule Areas</label>
      <label><svg class="cb"><use href="#tick"/></svg>Dimensions</label><label><svg class="cb"><use href="#tick"/></svg>Other items</label>
    </div>
  </aside>
</main>

<div class="messages">
  <div class="g1">Pads<br>435</div><div class="g2">Vias<br>64</div><div class="g3">Track Segments<br>958</div><div class="g4">Nets<br>115</div><div>Unrouted<br>0</div>
</div>
<footer class="status"><span class="s1">Z 1,05</span><span class="s2">X 229,3250&nbsp; Y 21,2000</span><span class="s3">dx 229,3250&nbsp; dy 21,2000&nbsp; dist 230,3028</span><span class="s4">grid X 0,0250&nbsp; Y 0,0250</span><span>mm</span></footer>

<section class="dialog">
  <div class="dtitle"><b>DRC Control</b><svg viewBox="0 0 20 20"><circle cx="10" cy="10" r="9.500" fill="#e95420"/><path d="M6.700 6.700l6.600 6.600m0-6.600l-6.600 6.600" stroke="#fff" stroke-width="1.700"/></svg></div>
  <div class="opts">
    <label><svg class="cb on"><use href="#tick"/></svg><span>Refill all zones before performing DRC</span></label>
    <label><svg class="cb on"><use href="#tick"/></svg><span>Report all errors for each track</span></label>
  </div>
  <div class="book">
    <div class="btabs"><b>Tests Running...</b></div>
    <div class="log">
      <div class="lines"><p>Checking disabled layers…</p><p>Checking text variables…</p><p>Checking track widths…</p><p>Checking via diameters…</p><p>Checking silkscreen for potential soldermask clipping…</p><p>Checking silkscreen for overlapping items…</p><p>Gathering length-constrained connections…</p><p>Done.</p></div>
      <i class="thumb"></i>
    </div>
    <div class="gauge"></div>
  </div>
  <div class="show">
    <span class="w1">Show:</span>
    <label class="w2"><svg class="cb white"></svg>All</label>
    <label class="w3"><svg class="cb on"><use href="#tick"/></svg>Errors<em>0</em></label>
    <label class="w4"><svg class="cb on"><use href="#tick"/></svg>Warnings<em>0</em></label>
    <label class="w5"><svg class="cb white"></svg>Exclusions</label>
    <button class="off save">Save…</button>
  </div>
  <div class="acts"><button class="off b1">Delete Marker</button><button class="off b2">Delete All Markers</button><button class="b3">Cancel</button><button class="off b4">Run DRC</button></div>
</section>
</body>
</html>
```

FILE: styles.css
```css
* { box-sizing: border-box; }
body { margin: 0; width: 1366px; height: 768px; overflow: hidden; position: relative; background: #f7f7f7; color: #949494; font: 14px/18px "Noto Sans", "Open Sans", sans-serif; white-space: nowrap; }
i, em { font-style: normal; display: block; }
p { margin: 0; }
.defs { position: absolute; }

/* shell bar */
.shell { height: 27px; background: #1d1d1d; color: #f2f2f2; display: flex; align-items: center; }
.activities { margin-left: 12px; width: 97px; letter-spacing: -.1px; }
.app-icon { width: 16px; height: 16px; margin-right: 6px; }
.app-name { width: 202px; letter-spacing: .15px; }
.clock { margin-left: 292px; width: 90px; }
.dot { width: 8px; height: 8px; border-radius: 50%; background: #f2f2f2; margin-left: 10px; }
.tray { width: 110px; height: 27px; margin-left: auto; }
.caret { border: 5px solid transparent; border-top-color: #c6c6c6; border-bottom: 0; }
.caret.white { border-top-color: #f2f2f2; margin-left: 5px; }

.titlebar { height: 37px; border-bottom: 1px solid #cfcfcf; display: grid; grid-template-columns: 1fr auto 1fr; align-items: center; }
.titlebar b { grid-column: 2; letter-spacing: .33px; padding-top: 1px; }
.winbtns { width: 90px; height: 24px; justify-self: end; margin-right: 6px; }
.menubar { height: 25px; border-bottom: 1px solid #dadada; display: flex; align-items: center; padding: 2px 0 0 8px; letter-spacing: .1px; }
.menubar .m1 { width: 40px; } .menubar .m2 { width: 43px; } .menubar .m3 { width: 49px; } .menubar .m4 { width: 52px; }
.menubar .m5 { width: 56px; } .menubar .m6 { width: 65px; } .menubar .m7 { width: 52px; } .menubar .m8 { width: 97px; }

/* toolbars */
.toolbar { display: flex; gap: 2px; align-items: center; height: 38px; padding: 0 5px; background: #fcfcfc; }
.tool { flex: none; width: 30px; height: 30px; padding: 3px; }
.tool svg { display: block; width: 24px; height: 24px; overflow: visible; }
.tool.on { padding: 2px; border: 1px solid #e95420; background: #f9cabc; }
.sep { width: 1px; height: 24px; background: #b9b9b9; margin: 0 3px; }
.net { font: bold 8px Lato, sans-serif; fill: #fff; }
.lbl { font: 12px "Noto Sans", sans-serif; fill: #545454; }
.ital { font-style: italic; }
.unit { font: 12.5px Inter, sans-serif; fill: #545454; }
.combo { height: 34px; border: 1px solid #cdcdcd; border-radius: 4px; background: #fafafa; color: #cecece; display: flex; align-items: center; padding: 0 12px 0 11px; }
.combo .caret { margin-left: auto; }
.layer-combo { width: 171px; padding-left: 9px; letter-spacing: -.1px; }
.sw-fcu { width: 14px; height: 14px; background: #c83434; border: 1px solid #000; margin-right: 2px; }
.toolrow { display: flex; height: 38px; }
.toolrow .toolbar { width: 861px; }
.c-track { width: 207px; } .c-via { width: 198px; letter-spacing: .12px; } .c-grid { width: 254px; } .c-zoom { width: 127px; }

/* work area */
.work { display: flex; height: 547px; }
.vbar { width: 35px; background: #fcfcfc; display: flex; flex-direction: column; gap: 2px; padding: 5px 0 0 2px; border-right: 1px solid #9c9c9c; overflow: hidden; }
.vbar.right { width: 40px; border-right: 5px solid #e6e6e6; border-left: 1px solid #9c9c9c; }
.hsep { flex: none; height: 1px; width: 22px; margin: 3px 0 3px 4px; background: #b9b9b9; }
.pale { color: #a6cfea; }
.line { fill: none; stroke: #b9b9b9; stroke-width: 1.6; }
.more { background: linear-gradient(135deg, transparent 50%, #9c9c9c 50%) 100% 100% / 7px 7px no-repeat; }
.canvas { display: grid; grid-template-columns: 1098px 13px; grid-template-rows: 533px 14px; background: #eee; border-bottom: 1px solid #bbb; height: 547px; }
.board { display: block; }
.vscroll { background: #eee; padding: 267px 0 0 4px; }
.vscroll i { width: 6px; height: 40px; border-radius: 3px; background: #d0d0d0; }
.zone { font: bold 7px "DejaVu Sans Mono", monospace; fill: #c567a4; text-anchor: middle; }
.yl, .gl { font: 6.4px "DejaVu Sans Mono", monospace; text-anchor: middle; }
.yl { fill: #f2efa2; stroke: #f2efa2; stroke-width: .3px; } .gl { fill: #b4b4b4; stroke: #b4b4b4; stroke-width: .25px; }

/* right panel */
.panel { width: 180px; overflow: hidden; background: #f7f7f7; }
.cap { height: 17px; background: #c3c3c3; color: #454545; font-size: 12px; line-height: 14px; padding-left: 3px; letter-spacing: -.1px; }
.tabs { height: 38px; border: 1px solid #cdcdcd; display: flex; background: #fcfcfc; }
.tabs b { width: 130px; text-align: right; padding-right: 11px; line-height: 36px; border: 1px solid #cdcdcd; border-width: 0 1px; box-shadow: inset 0 -3px #e95420; background: #f9f9f9; }
.arr { width: 24px; display: flex; align-items: center; justify-content: center; }
.arr::before { content: ""; border: 5px solid transparent; }
.arr.l::before { border-right-color: #c9c9c9; border-left: 0; } .arr.r::before { border-left-color: #8f8f8f; border-right: 0; }
.layers { height: 248px; overflow: hidden; background: #fcfcfc; border: 1px solid #cdcdcd; border-width: 0 1px 1px; padding-top: 1px; }
.row { height: 18px; display: flex; align-items: center; padding-left: 20px; letter-spacing: -.36px; }
.row .tight { letter-spacing: -.65px; }
.row.cur { background: #ececec; }
.row.cur::before { content: ""; border: 6px solid transparent; border-left: 7px solid #3b3bf5; border-right: 0; margin: 0 6px 0 -13px; }
.row svg { width: 16px; height: 16px; margin: 0 5px 0 6px; }
.sw { width: 18px; height: 13px; border: 1px solid rgba(0, 0, 0, .08); }
.c1 { background: #c83434; } .c2 { background: #4d7fc4; } .c3 { background: #840084; } .c4 { background: #000084; } .c5 { background: #a2918c; }
.c6 { background: #00b4b4; } .c7 { background: #f2eda1; } .c8 { background: #e8b2a7; } .c9 { background: #57327a; } .c10 { background: #007070; }
.c11 { background: #c2c2c2; } .c12 { background: #5994dc; } .c13 { background: #b4dbd2; } .c14 { background: #d8c852; }
.ldo { height: 25px; border: 1px solid #cdcdcd; border-top: 0; display: flex; align-items: center; padding: 3px 0 0 8px; background: #fcfcfc; letter-spacing: -.56px; }
.ldo i { border: 5px solid transparent; border-left-color: #8f8f8f; border-right: 0; margin-right: 2px; }
.presets { height: 18px; padding-left: 7px; letter-spacing: -.45px; line-height: 17px; }
.pcombo { margin-left: 7px; width: 166px; height: 34px; border: 1px solid #cdcdcd; border-left: 0; border-radius: 0 4px 4px 0; display: flex; align-items: center; color: #cecece; background: #fafafa; letter-spacing: -.9px; }
.pcombo .caret { margin: 0 12px 0 auto; }
.pcombo + .cap { margin-top: 14px; box-shadow: 0 -5px #e6e6e6; }
.filters { display: grid; grid-template-columns: 108px 110px; grid-auto-rows: 21px; padding: 4px 0 0 9px; letter-spacing: -.4px; }
.filters label { padding-top: 1px; }
label { display: flex; align-items: center; }
.cb { flex: none; width: 16px; height: 16px; border: 1px solid #bcbcbc; border-radius: 3px; background: #fafafa; color: #8f8f8f; margin-right: 4px; padding: 0; }
.cb.on { background: #924d8b; border-color: #924d8b; color: #fff; }
.cb.white { background: #fff; }

/* bottom */
.messages { height: 34px; background: #fcfcfc; display: flex; line-height: 17px; padding-left: 14px; letter-spacing: .1px; }
.g1 { width: 65px; } .g2 { width: 61px; } .g3 { width: 138px; } .g4 { width: 64px; }
.status { height: 22px; display: flex; align-items: center; padding: 2px 0 0 130px; }
.s1 { width: 85px; } .s2 { width: 192px; } .s3 { width: 309px; letter-spacing: -.05px; } .s4 { width: 222px; letter-spacing: -.05px; }

/* dialog */
.dialog { position: absolute; left: 291px; top: 153px; width: 784px; height: 563px; background: #f7f7f7; border: 1px solid #8f8f8f; border-left-color: #f0f0f0; border-radius: 7px 7px 0 0; box-shadow: 0 4px 16px rgba(0, 0, 0, .5); color: #3d3d3d; display: flex; flex-direction: column; }
.dtitle { height: 36px; background: #dedede; border-bottom: 1px solid #c0c0c0; border-radius: 6px 6px 0 0; display: grid; grid-template-columns: 1fr auto 1fr; align-items: center; box-shadow: inset 0 1px #f4f4f4; }
.dtitle b { grid-column: 2; letter-spacing: .4px; }
.dtitle svg { width: 20px; height: 20px; justify-self: end; margin: 0 8px 1px 0; }
.opts { height: 75px; padding: 10px 0 0 16px; letter-spacing: .14px; }
.opts label { height: 27px; }
.opts label span { padding-top: 1px; }
.book { margin: 0 5px 0 4px; height: 345px; border: 1px solid #cdcdcd; background: #fff; }
.btabs { height: 37px; background: #f7f7f7; border-bottom: 1px solid #cdcdcd; padding-left: 8px; letter-spacing: .17px; }
.btabs b { display: block; width: 137px; height: 37px; text-align: center; line-height: 36px; box-shadow: inset 0 -3px #e95420; }
.log { margin: 5px 5px 0; height: 290px; border-top: 1px solid #d6d6d6; display: flex; justify-content: space-between; color: #000; font: 14.6px/24px "DejaVu Sans", sans-serif; overflow: hidden; }
.lines { padding: 0 0 0 10px; margin-top: -18px; }
.thumb { width: 3px; height: 91px; border-radius: 2px; background: #a9a9a9; margin: 168px 1px 0 0; }
.gauge { height: 4px; margin: 1px 10px 0; border: 1px solid #c0c0c0; background: #dedede; border-radius: 2px; }
.show { height: 61px; padding: 10px 0 15px 5px; display: flex; align-items: center; border-bottom: 2px solid #dcdcdc; margin: 0 9px; }
.w1 { width: 54px; } .w2 { width: 91px; } .w3 { width: 158px; letter-spacing: .15px; } .w4 { width: 178px; } .w5 { width: 187px; letter-spacing: .15px; }
em { width: 25px; height: 16px; border-radius: 8px; background: #008000; color: #fff; font: bold 14px/16px "Noto Sans", sans-serif; text-align: center; margin-left: 10px; letter-spacing: 0; }
button { height: 34px; border: 1px solid #c0c0c0; border-radius: 4px; background: #fcfcfc; color: #3d3d3d; font: inherit; padding: 0; flex: none; }
button.off { color: #949494; background: #fafafa; }
.save { width: 85px; }
.acts { display: flex; padding: 5px 0 0 14px; }
.b1 { width: 129px; margin-right: 10px; } .b2 { width: 157px; margin-right: 274px; } .b3 { width: 85px; margin-right: 6px; } .b4 { width: 90px; }
```
